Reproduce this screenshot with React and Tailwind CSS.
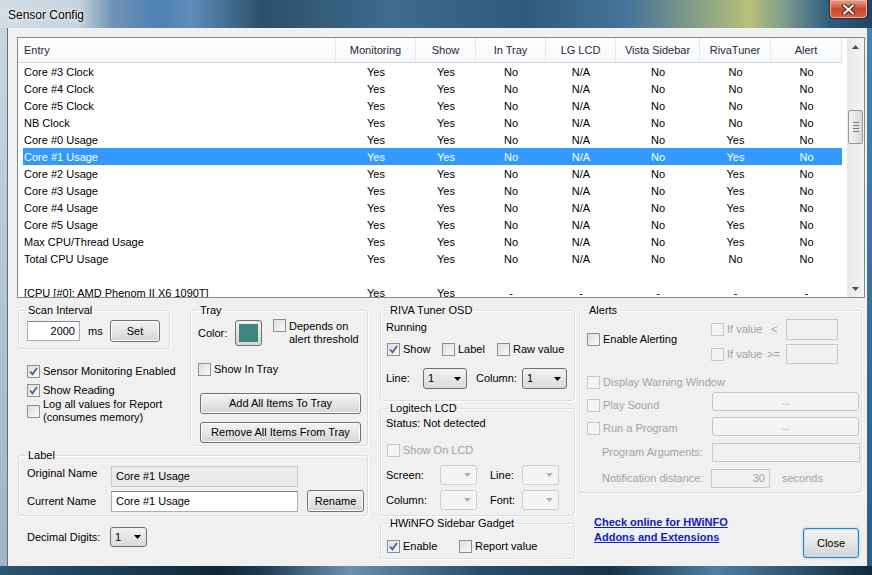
import React from "react";

const rows = [
  ["Core #3 Clock", "Yes", "Yes", "No", "N/A", "No", "No", "No"],
  ["Core #4 Clock", "Yes", "Yes", "No", "N/A", "No", "No", "No"],
  ["Core #5 Clock", "Yes", "Yes", "No", "N/A", "No", "No", "No"],
  ["NB Clock", "Yes", "Yes", "No", "N/A", "No", "No", "No"],
  ["Core #0 Usage", "Yes", "Yes", "No", "N/A", "No", "Yes", "No"],
  ["Core #1 Usage", "Yes", "Yes", "No", "N/A", "No", "Yes", "No"],
  ["Core #2 Usage", "Yes", "Yes", "No", "N/A", "No", "Yes", "No"],
  ["Core #3 Usage", "Yes", "Yes", "No", "N/A", "No", "Yes", "No"],
  ["Core #4 Usage", "Yes", "Yes", "No", "N/A", "No", "Yes", "No"],
  ["Core #5 Usage", "Yes", "Yes", "No", "N/A", "No", "Yes", "No"],
  ["Max CPU/Thread Usage", "Yes", "Yes", "No", "N/A", "No", "Yes", "No"],
  ["Total CPU Usage", "Yes", "Yes", "No", "N/A", "No", "No", "No"],
  ["", "", "", "", "", "", "", ""],
  ["[CPU [#0]: AMD Phenom II X6 1090T]", "Yes", "Yes", "-", "-", "-", "-", "-"],
];

const columns = ["Entry", "Monitoring", "Show", "In Tray", "LG LCD", "Vista Sidebar", "RivaTuner", "Alert"];

function GroupBox({ title, className = "", children }) {
  return (
    <fieldset className={`rounded-[3px] border border-[#d5dfe5] shadow-[inset_1px_1px_0_#fff,1px_1px_0_#fff] ${className}`}>
      <legend className="ml-[7px] px-[2px] leading-[14px]">{title}</legend>
      {children}
    </fieldset>
  );
}

function Box({ checked, disabled, className = "" }) {
  return (
    <span
      className={`flex h-[13px] w-[13px] shrink-0 items-center justify-center border ${
        disabled ? "border-[#c9c9c9] bg-[#f4f4f4]" : "border-[#8e8f8f] bg-gradient-to-br from-[#dedede] to-[#fafafa]"
      } ${className}`}
    >
      {checked && (
        <svg width="11" height="11" viewBox="0 0 11 11">
          <path d="M2 5.5 L4.5 8.3 L9 2" fill="none" stroke="#4a5f97" strokeWidth="1.8" />
        </svg>
      )}
    </span>
  );
}

function CheckBox({ checked, disabled, label, className = "" }) {
  return (
    <div className={`flex items-center whitespace-nowrap ${className}`}>
      <Box checked={checked} disabled={disabled} />
      {label && <span className={`ml-[3px] leading-[13px] ${disabled ? "text-[#a3a3a3]" : ""}`}>{label}</span>}
    </div>
  );
}

function Button({ children, disabled, className = "" }) {
  return (
    <div
      className={`flex items-center justify-center whitespace-nowrap rounded-[3px] border ${
        disabled
          ? "border-[#c4c4c4] bg-[#f4f4f4] text-[#a3a3a3]"
          : "border-[#707070] bg-gradient-to-b from-[#f3f3f3] via-[#e6e6e6] to-[#d4d4d4] shadow-[inset_0_0_0_1px_#fcfcfc]"
      } ${className}`}
    >
      {children}
    </div>
  );
}

function Select({ value, disabled, className = "" }) {
  return (
    <div
      className={`flex items-center justify-between rounded-[3px] border pl-[4px] pr-[5px] ${
        disabled ? "border-[#cfcfcf] bg-[#f4f4f4]" : "border-[#707070] bg-gradient-to-b from-[#f2f2f2] to-[#dadada]"
      } ${className}`}
    >
      <span>{value}</span>
      <svg width="7" height="4" viewBox="0 0 7 4">
        <path d="M0 0h7L3.5 4z" fill={disabled ? "#b0b0b0" : "#000"} />
      </svg>
    </div>
  );
}

function TextBox({ value, disabled, align = "left", className = "" }) {
  return (
    <div
      className={`flex items-center border px-[4px] ${
        disabled ? "border-[#c9c9c9] bg-[#f0f0f0] text-[#a3a3a3]" : "border-[#abadb3] border-t-[#828790] bg-white"
      } ${align === "right" ? "justify-end" : ""} ${className}`}
    >
      {value}
    </div>
  );
}

function Scrollbar() {
  return (
    <div className="flex w-[17px] flex-col bg-gradient-to-r from-[#e8e8e8] to-[#f4f4f4]">
      <div className="flex h-[17px] items-center justify-center">
        <svg width="7" height="4" viewBox="0 0 7 4">
          <path d="M0 4h7L3.5 0z" fill="#4d4d4d" />
        </svg>
      </div>
      <div className="mx-[1px] mt-[55px] flex h-[34px] items-center justify-center rounded-[2px] border border-[#969696] bg-gradient-to-r from-[#f4f4f4] to-[#d8d8d8]">
        <div className="flex flex-col gap-[2px]">
          <div className="h-px w-[6px] bg-[#7a7a7a]" />
          <div className="h-px w-[6px] bg-[#7a7a7a]" />
          <div className="h-px w-[6px] bg-[#7a7a7a]" />
          <div className="h-px w-[6px] bg-[#7a7a7a]" />
        </div>
      </div>
      <div className="flex-1" />
      <div className="flex h-[17px] items-center justify-center">
        <svg width="7" height="4" viewBox="0 0 7 4">
          <path d="M0 0h7L3.5 4z" fill="#4d4d4d" />
        </svg>
      </div>
    </div>
  );
}

function SensorList() {
  return (
    <div className="flex h-[261px] w-[848px] border border-[#828790] bg-white">
      <div className="flex-1 overflow-hidden">
        <div className="grid h-[25px] w-[824px] grid-cols-[318px_80px_60px_70px_70px_84px_71px_71px] border-b border-[#d5d5d5] bg-gradient-to-b from-white to-[#f6f7f9] text-[#1e2a3a]">
          {columns.map((c, i) => (
            <div key={c} className={`flex items-center border-r border-[#e3e6ea] pt-[1px] ${i === 0 ? "pl-[6px]" : "justify-center"}`}>
              {c}
            </div>
          ))}
        </div>
        <div className="ml-[5px]">
          {rows.map((r, idx) => {
            const selected = idx === 5;
            return (
              <div
                key={idx}
                className={`grid h-[17px] w-[819px] grid-cols-[313px_80px_60px_70px_70px_84px_71px_71px] ${selected ? "bg-[#3399ff] text-white" : ""}`}
              >
                {r.map((cell, i) => (
                  <div key={i} className={`flex items-center whitespace-nowrap pt-[1px] ${i === 0 ? "pl-[1px]" : "justify-center"}`}>
                    {cell}
                  </div>
                ))}
              </div>
            );
          })}
        </div>
      </div>
      <Scrollbar />
    </div>
  );
}

export default function App() {
  return (
    <div
      className="relative flex h-[575px] w-[872px] flex-col overflow-hidden text-[11px] text-black"
      style={{ fontFamily: "'Liberation Sans', Arial, sans-serif" }}
    >
      {/* title bar (glass) */}
      <div className="flex h-[28px] items-start justify-between bg-[linear-gradient(90deg,#d3dde5_0%,#c4d3de_9%,#6f93b3_13%,#4f80b5_18%,#5e8db8_22%,#2c4f6c_30%,#3f6b8c_45%,#305a79_60%,#46749a_72%,#b8c07a_86%,#7e9a8e_90%,#2f5d80_95%,#1d4466_100%)]">
        <span className="ml-[8px] mt-[7px] text-[12px] leading-[16px] [text-shadow:0_0_6px_#fff,0_0_3px_#fff]">Sensor Config</span>
        <div className="mr-[4px] flex h-[19px] w-[39px] items-center justify-center rounded-b-[5px] border border-t-0 border-[#5a1d14] bg-gradient-to-b from-[#e6a596] via-[#c8482f] to-[#d8663e] shadow-[inset_0_0_0_1px_#f0b0a0]">
          <svg width="13" height="11" viewBox="0 0 13 11">
            <path d="M2 1.5 L11 9.5 M11 1.5 L2 9.5" stroke="#4a1a12" strokeWidth="4" strokeLinecap="round" />
            <path d="M2 1.5 L11 9.5 M11 1.5 L2 9.5" stroke="#fff" strokeWidth="2.2" strokeLinecap="round" />
          </svg>
        </div>
      </div>

      <div className="flex flex-1">
        <div className="w-[8px] border-r border-[#5d6f7d] bg-gradient-to-b from-[#c9d6df] to-[#9fb4c4]" />
        {/* client area */}
        <div className="flex-1 bg-[#f0f0f0] pl-[9px] pr-[2px] pt-[9px]">
          <SensorList />

          <div className="ml-[1px] mt-[5px] flex items-start">
            {/* left column */}
            <div className="flex w-[350px] flex-col">
              <div className="flex items-start">
                <div className="flex w-[152px] flex-col">
                  <GroupBox title="Scan Interval" className="h-[46px] w-[152px]">
                    <div className="mt-[3px] flex h-[22px] items-center">
                      <TextBox value="2000" align="right" className="ml-[8px] h-[20px] w-[53px]" />
                      <span className="ml-[8px] w-[22px]">ms</span>
                      <Button className="h-[22px] w-[50px]">Set</Button>
                    </div>
                  </GroupBox>
                  <CheckBox checked label="Sensor Monitoring Enabled" className="ml-[9px] mt-[16px]" />
                  <CheckBox checked label="Show Reading" className="ml-[9px] mt-[6px]" />
                  <div className="ml-[9px] mt-[1px] flex items-center whitespace-nowrap">
                    <Box />
                    <span className="ml-[3px] leading-[13px]">
                      Log all values for Report
                      <br />
                      (consumes memory)
                    </span>
                  </div>
                </div>
                <GroupBox title="Tray" className="ml-[20px] h-[143px] w-[178px]">
                  <div className="mt-[3px] flex items-center">
                    <span className="ml-[7px] w-[37px]">Color:</span>
                    <div className="flex h-[26px] w-[27px] items-center justify-center rounded-[3px] border border-[#707070] bg-gradient-to-b from-[#f2f2f2] to-[#d6d6d6]">
                      <div className="h-[18px] w-[19px] bg-[#3f8681]" />
                    </div>
                    <div className="ml-[11px] flex items-start">
                      <Box className="mt-[-1px]" />
                      <span className="ml-[3px] leading-[13px]">
                        Depends on
                        <br />
                        alert threshold
                      </span>
                    </div>
                  </div>
                  <CheckBox label="Show In Tray" className="ml-[7px] mt-[17px]" />
                  <Button className="ml-[9px] mt-[17px] h-[21px] w-[161px]">Add All Items To Tray</Button>
                  <Button className="ml-[9px] mt-[8px] h-[21px] w-[161px]">Remove All Items From Tray</Button>
                </GroupBox>
              </div>

              <GroupBox title="Label" className="mt-[2px] h-[68px] w-[350px]">
                <div className="mt-[4px] flex items-start">
                  <span className="ml-[8px] w-[84px] leading-[14px]">Original Name</span>
                  <TextBox value="Core #1 Usage" className="h-[21px] w-[187px] !bg-[#ebebeb] !text-black" disabled />
                </div>
                <div className="mt-[3px] flex items-center">
                  <span className="ml-[8px] w-[84px]">Current Name</span>
                  <TextBox value="Core #1 Usage" className="h-[21px] w-[187px]" />
                  <Button className="ml-[9px] h-[22px] w-[57px]">Rename</Button>
                </div>
              </GroupBox>

              <div className="mt-[11px] flex items-center">
                <span className="ml-[9px] w-[83px]">Decimal Digits:</span>
                <Select value="1" className="h-[20px] w-[37px]" />
              </div>
            </div>

            {/* middle column */}
            <div className="ml-[12px] flex w-[195px] flex-col">
              <GroupBox title="RIVA Tuner OSD" className="h-[98px] w-[195px]">
                <div className="ml-[5px] mt-[3px] leading-[14px]">Running</div>
                <div className="ml-[6px] mt-[9px] flex">
                  <CheckBox checked label="Show" className="w-[55px]" />
                  <CheckBox label="Label" className="w-[55px]" />
                  <CheckBox label="Raw value" />
                </div>
                <div className="ml-[5px] mt-[12px] flex items-center">
                  <span className="w-[37px]">Line:</span>
                  <Select value="1" className="h-[21px] w-[44px]" />
                  <span className="ml-[9px] w-[46px]">Column:</span>
                  <Select value="1" className="h-[21px] w-[45px]" />
                </div>
              </GroupBox>
              <GroupBox title="Logitech LCD" className="h-[115px] w-[195px]">
                <div className="ml-[5px] mt-[1px] leading-[14px]">Status: Not detected</div>
                <CheckBox disabled label="Show On LCD" className="ml-[6px] mt-[14px]" />
                <div className="ml-[5px] mt-[8px] flex items-center">
                  <span className="w-[54px]">Screen:</span>
                  <Select disabled className="h-[20px] w-[37px]" />
                  <span className="ml-[13px] w-[32px]">Line:</span>
                  <Select disabled className="h-[20px] w-[37px]" />
                </div>
                <div className="ml-[5px] mt-[5px] flex items-center">
                  <span className="w-[54px]">Column:</span>
                  <Select disabled className="h-[20px] w-[37px]" />
                  <span className="ml-[13px] w-[32px]">Font:</span>
                  <Select disabled className="h-[20px] w-[37px]" />
                </div>
              </GroupBox>
              <GroupBox title="HWiNFO Sidebar Gadget" className="h-[43px] w-[195px]">
                <div className="ml-[6px] mt-[10px] flex">
                  <CheckBox checked label="Enable" className="w-[72px]" />
                  <CheckBox label="Report value" />
                </div>
              </GroupBox>
            </div>

            {/* right column */}
            <div className="ml-[4px] flex w-[283px] flex-col">
              <GroupBox title="Alerts" className="h-[190px] w-[283px]">
                <div className="mt-[2px] flex items-start">
                  <CheckBox label="Enable Alerting" className="ml-[7px] mt-[14px] w-[124px]" />
                  <div className="flex flex-col">
                    <div className="flex items-center">
                      <Box disabled />
                      <span className="ml-[3px] w-[44px] text-[#a3a3a3]">If value</span>
                      <span className="w-[15px] text-[#a3a3a3]">&lt;</span>
                      <TextBox disabled className="h-[21px] w-[52px]" />
                    </div>
                    <div className="mt-[4px] flex items-center">
                      <Box disabled />
                      <span className="ml-[3px] w-[40px] text-[#a3a3a3]">If value</span>
                      <span className="w-[19px] text-[#a3a3a3]">&gt;=</span>
                      <TextBox disabled className="h-[20px] w-[52px]" />
                    </div>
                  </div>
                </div>
                <CheckBox disabled label="Display Warning Window" className="ml-[7px] mt-[12px]" />
                <div className="mt-[3px] flex h-[19px] items-start">
                  <CheckBox disabled label="Play Sound" className="ml-[7px] mt-[7px] w-[125px]" />
                  <Button disabled className="h-[19px] w-[147px]">...</Button>
                </div>
                <div className="mt-[6px] flex h-[19px] items-start">
                  <CheckBox disabled label="Run a Program" className="ml-[7px] mt-[5px] w-[125px]" />
                  <Button disabled className="h-[19px] w-[147px]">...</Button>
                </div>
                <div className="mt-[7px] flex items-center">
                  <span className="ml-[22px] w-[110px] text-[#a3a3a3]">Program Arguments:</span>
                  <TextBox disabled className="h-[19px] w-[148px]" />
                </div>
                <div className="mt-[7px] flex items-center">
                  <span className="ml-[22px] w-[109px] text-[#a3a3a3]">Notification distance:</span>
                  <TextBox disabled value="30" align="right" className="h-[19px] w-[59px]" />
                  <span className="ml-[12px] text-[#a3a3a3]">seconds</span>
                </div>
              </GroupBox>
              <div className="flex items-start justify-between">
                <a className="ml-[15px] mt-[22px] font-bold leading-[15px] text-[#1020c0] underline">
                  Check online for HWiNFO
                  <br />
                  Addons and Extensions
                </a>
                <div className="mr-[3px] mt-[35px] flex h-[30px] w-[56px] items-center justify-center rounded-[3px] border border-[#3c7fb1] bg-gradient-to-b from-[#f2f2f2] via-[#e6e6e6] to-[#d2d2d2] shadow-[inset_0_0_0_1px_#aee0f8,0_0_3px_#8fd0f5]">
                  Close
                </div>
              </div>
            </div>
          </div>
        </div>
        <div className="w-[5px] bg-gradient-to-b from-[#4a82ad] to-[#2a5d88]" />
      </div>
      <div className="h-[9px] bg-[linear-gradient(90deg,#2b5574_0%,#0e2638_25%,#1d3a52_30%,#6e8fab_40%,#2a4d6a_55%,#163248_70%,#4f7ea3_82%,#112a3e_100%)]" />
    </div>
  );
}
